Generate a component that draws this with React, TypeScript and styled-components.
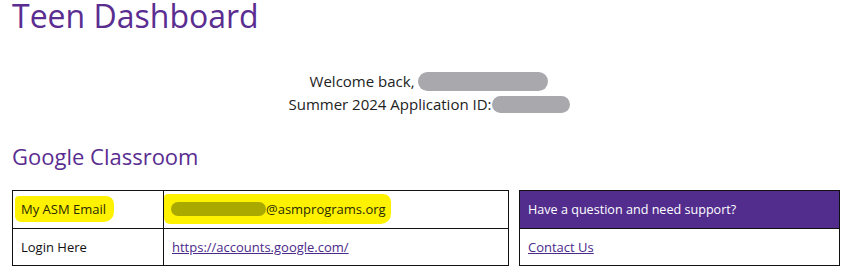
import React from "react";
import styled, { createGlobalStyle } from "styled-components";

const Global = createGlobalStyle`
  html, body { margin: 0; padding: 0; background: #fff; }
  body { font-family: "Open Sans", "Liberation Sans", sans-serif; color: #222; }
`;

const Page = styled.div`
  padding: 0 7px 0 12px;
  width: 847px;
  box-sizing: border-box;
`;

const Title = styled.h1`
  margin: 0;
  padding-top: 0;
  font-size: 32px;
  font-weight: 400;
  line-height: 31px;
  color: #5a2d91;
`;

const Welcome = styled.div`
  margin-top: 39px;
  text-align: center;
  font-size: 15px;
  line-height: 23px;
  color: #222;
  padding-left: 6px;
`;

const Line = styled.div`
  display: flex;
  justify-content: center;
  align-items: center;
  white-space: pre;
`;

const Redact = styled.span<{ $w: number; $h: number; $c: string }>`
  display: inline-block;
  width: ${(p) => p.$w}px;
  height: ${(p) => p.$h}px;
  background: ${(p) => p.$c};
  border-radius: 10px;
`;

const Section = styled.h2`
  margin: 26px 0 0;
  font-size: 22px;
  font-weight: 400;
  line-height: 28px;
  color: #5a2d91;
`;

const Row = styled.div`
  display: flex;
  gap: 10px;
  margin-top: 20px;
`;

const Table = styled.table<{ $w: number }>`
  width: ${(p) => p.$w}px;
  border-collapse: collapse;
  font-size: 13px;
  color: #111;
`;

const Cell = styled.td<{ $w?: number; $pl?: number }>`
  border: 1px solid #111;
  height: 37px;
  padding: 0 8px 0 ${(p) => (p.$pl ?? 8)}px;
  box-sizing: border-box;
  ${(p) => (p.$w ? `width: ${p.$w}px;` : "")}
`;

const HeadCell = styled.th`
  background: #522d8e;
  color: #fff;
  border: 1px solid #111;
  height: 37px;
  padding: 0 8px;
  text-align: left;
  font-weight: 400;
  font-size: 12.6px;
`;

const Highlight = styled.span<{ $pad: string }>`
  display: inline-flex;
  align-items: center;
  background: #fff200;
  border-radius: 4px 8px 10px 6px;
  padding: ${(p) => p.$pad};
  color: #2a2a00;
`;

const Link = styled.a`
  color: #4b2a8a;
  text-decoration: underline;
`;

export default function App() {
  return (
    <>
      <Global />
      <Page>
        <Title>Teen Dashboard</Title>
        <Welcome>
          <Line>
            {"Welcome back, "}
            <Redact $w={130} $h={19} $c="#a9a9ad" />
          </Line>
          <Line>
            {"Summer 2024 Application ID:"}
            <Redact $w={78} $h={17} $c="#a9a9ad" />
          </Line>
        </Welcome>
        <Section>Google Classroom</Section>
        <Row>
          <Table $w={497}>
            <tbody>
              <tr>
                <Cell $w={151} $pl={2}>
                  <Highlight $pad="4px 8px 4px 6px">My ASM Email</Highlight>
                </Cell>
                <Cell $pl={0}>
                  <Highlight $pad="6px 5px 6px 7px">
                    <Redact $w={95} $h={14} $c="#a9a900" />
                    @asmprograms.org
                  </Highlight>
                </Cell>
              </tr>
              <tr>
                <Cell $w={151}>Login Here</Cell>
                <Cell>
                  <Link href="#">https://accounts.google.com/</Link>
                </Cell>
              </tr>
            </tbody>
          </Table>
          <Table $w={321}>
            <tbody>
              <tr>
                <HeadCell>Have a question and need support?</HeadCell>
              </tr>
              <tr>
                <Cell>
                  <Link href="#">Contact Us</Link>
                </Cell>
              </tr>
            </tbody>
          </Table>
        </Row>
      </Page>
    </>
  );
}
